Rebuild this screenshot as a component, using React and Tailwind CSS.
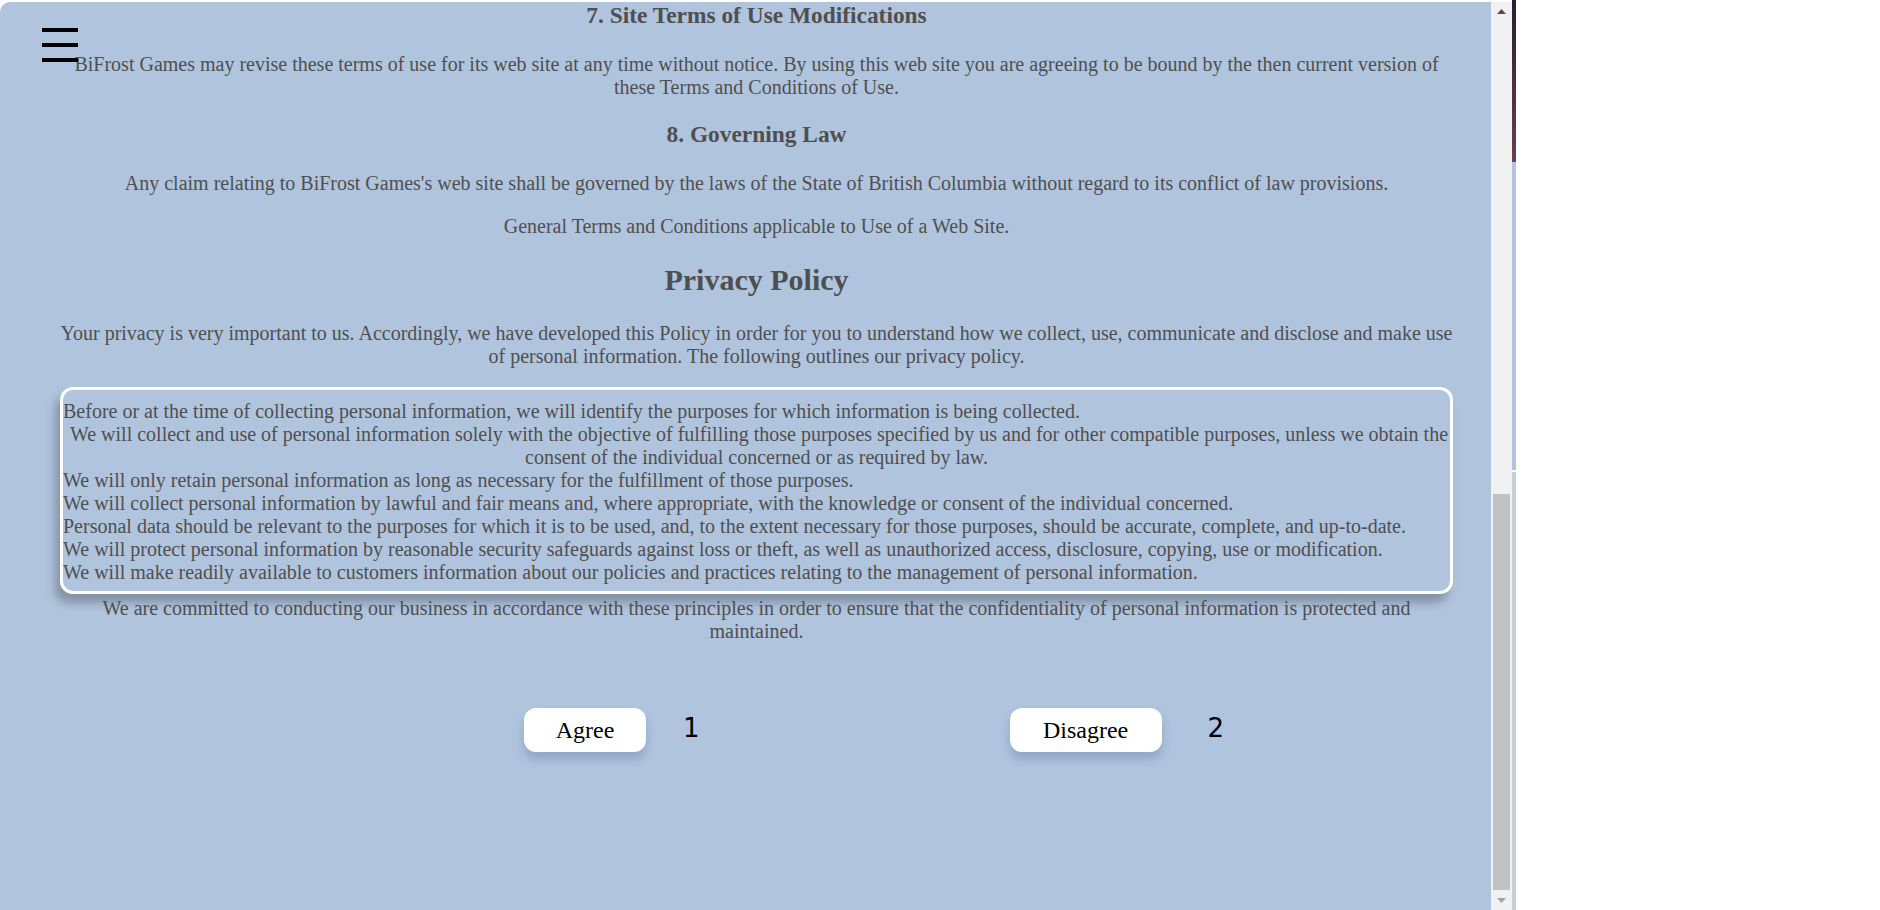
import React from "react";

const serif = "font-['Liberation_Serif','Times_New_Roman',serif]";

const policyItems = [
  "Before or at the time of collecting personal information, we will identify the purposes for which information is being collected.",
  "We will only retain personal information as long as necessary for the fulfillment of those purposes.",
  "We will collect personal information by lawful and fair means and, where appropriate, with the knowledge or consent of the individual concerned.",
  "Personal data should be relevant to the purposes for which it is to be used, and, to the extent necessary for those purposes, should be accurate, complete, and up-to-date.",
  "We will protect personal information by reasonable security safeguards against loss or theft, as well as unauthorized access, disclosure, copying, use or modification.",
  "We will make readily available to customers information about our policies and practices relating to the management of personal information.",
];

const Arrow = ({ down, color }) => (
  <svg width="9" height="5" viewBox="0 0 9 5">
    <polygon points={down ? "0,0 9,0 4.5,5" : "0,5 9,5 4.5,0"} fill={color} />
  </svg>
);

const Scrollbar = () => (
  <div className="w-[21px] h-full bg-[#f1f1f1] flex flex-col">
    <div className="h-[17px] flex items-center justify-center pt-[2px]">
      <Arrow color="#505050" />
    </div>
    <div className="flex-1" />
    <div className="h-[396px] mx-[2px] bg-[#c1c1c1]" />
    <div className="h-[20px] flex items-center justify-center">
      <Arrow down color="#a3a3a3" />
    </div>
  </div>
);

const MenuIcon = () => (
  <div className="absolute left-[42px] top-[26px] w-[36px] flex flex-col gap-[11px]">
    <div className="h-[4px] bg-black" />
    <div className="h-[4px] bg-black" />
    <div className="h-[4px] bg-black" />
  </div>
);

const App = () => {
  return (
    <div className="w-[1880px] h-[910px] bg-white flex overflow-hidden">
      <div className="w-[1512px] h-full pt-[2px] flex">
        <div className="flex-1 h-full bg-[#b0c4de] rounded-tl-[10px] relative overflow-hidden">
          <MenuIcon />
          <div className={`${serif} text-[#4f4f4f] pl-[59px] pr-[37px] text-center text-[20px] leading-[23px]`}>
            <h3 className="text-[23.4px] leading-[27px] font-bold">
              7. Site Terms of Use Modifications
            </h3>
            <p className="mt-[24px]">
              BiFrost Games may revise these terms of use for its web site at any time without notice. By using this
              web site you are agreeing to be bound by the then current version of these Terms and Conditions of Use.
            </p>
            <h3 className="mt-[22px] text-[23.4px] leading-[27px] font-bold">8. Governing Law</h3>
            <p className="mt-[24px]">
              Any claim relating to BiFrost Games's web site shall be governed by the laws of the State of British
              Columbia without regard to its conflict of law provisions.
            </p>
            <p className="mt-[20px]">General Terms and Conditions applicable to Use of a Web Site.</p>
            <h2 className="mt-[25px] text-[30px] leading-[34px] font-bold">Privacy Policy</h2>
            <p className="mt-[25px]">
              Your privacy is very important to us. Accordingly, we have developed this Policy in order for you to
              understand how we collect, use, communicate and disclose and make use of personal information. The
              following outlines our privacy policy.
            </p>

            <div className="mt-[19px] mx-[1px] border-[3px] border-white rounded-[13px] pt-[10px] pb-[7px] text-left shadow-[-5px_9px_10px_rgba(0,0,0,0.25)]">
              <div>{policyItems[0]}</div>
              <div className="text-center">
                {"\u00a0"}We will collect and use of personal information solely with the objective of fulfilling those
                purposes specified by us and for other compatible purposes, unless we obtain the consent of the
                individual concerned or as required by law.
              </div>
              {policyItems.slice(1).map((item) => (
                <div key={item}>{item}</div>
              ))}
            </div>

            <p className="mt-[3px]">
              We are committed to conducting our business in accordance with these principles in order to ensure that
              the confidentiality of personal information is protected and maintained.
            </p>

            <div className="mt-[65px] flex items-start">
              <button className="ml-[465px] w-[122px] h-[44px] bg-white rounded-[12px] text-black text-[24px] flex items-center justify-center shadow-[0_7px_10px_rgba(60,90,140,0.28)]">
                Agree
              </button>
              <span className="ml-[37px] mt-[7px] text-[26px] leading-none text-black font-['DejaVu_Sans',sans-serif]">
                1
              </span>
              <button className="ml-[310px] w-[152px] h-[44px] bg-white rounded-[12px] text-black text-[24px] flex items-center justify-center shadow-[0_7px_10px_rgba(60,90,140,0.28)]">
                Disagree
              </button>
              <span className="ml-[46px] mt-[7px] text-[26px] leading-none text-black font-['DejaVu_Sans',sans-serif]">
                2
              </span>
            </div>
          </div>
        </div>
        <Scrollbar />
      </div>
      <div className="w-[4px] h-full flex flex-col">
        <div className="h-[162px] bg-gradient-to-b from-[#2a1d33] to-[#6b3f55]" />
        <div className="h-[308px] bg-[#b0c4de]" />
        <div className="h-[2px] bg-white" />
        <div className="flex-1 bg-[#c9ced6]" />
      </div>
    </div>
  );
};

export default App;
